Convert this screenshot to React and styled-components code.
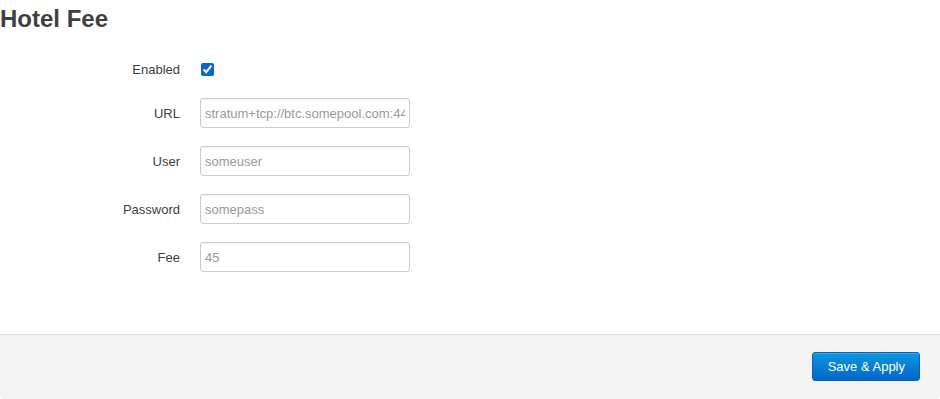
import styled, { createGlobalStyle } from 'styled-components';

const GlobalStyle = createGlobalStyle`
  html, body {
    margin: 0;
    padding: 0;
    background: #fff;
  }
  body {
    font-family: "Liberation Sans", Arial, sans-serif;
    font-size: 13px;
    color: #404040;
  }
`;

const Page = styled.div`
  width: 940px;
  height: 399px;
  display: flex;
  flex-direction: column;
  padding-top: 5px;
  box-sizing: border-box;
`;

const Title = styled.h2`
  margin: 0;
  font-size: 24px;
  line-height: 28px;
  font-weight: bold;
  color: #404040;
`;

const Form = styled.div`
  display: flex;
  flex-direction: column;
  gap: 18px;
  margin-top: 24px;
  flex: 1;
`;

const Row = styled.div`
  display: grid;
  grid-template-columns: 180px 210px;
  column-gap: 20px;
  align-items: center;
  min-height: ${p => (p.$compact ? '24px' : '30px')};
  margin-bottom: ${p => (p.$compact ? '-1px' : '0')};
`;

const Label = styled.label`
  text-align: right;
  font-size: 13px;
  color: #404040;
`;

const Check = styled.input`
  display: block;
  margin: 1px 0 0 1px;
  width: 13px;
  height: 13px;
  accent-color: #0b63d5;
`;

const Field = styled.input`
  box-sizing: border-box;
  width: 210px;
  height: 30px;
  padding: 0 4px;
  border: 1px solid #ccc;
  border-radius: 3px;
  font-family: "Liberation Sans", Arial, sans-serif;
  font-size: 13px;
  color: #404040;
  background: #fff;
  box-shadow: inset 0 1px 1px rgba(0, 0, 0, 0.05);
  outline: none;
  &::placeholder {
    color: #999;
  }
`;

const Footer = styled.div`
  display: flex;
  justify-content: flex-end;
  padding: 17px 20px 18px;
  background: #f3f3f3;
  border-top: 1px solid #ddd;
  border-radius: 0 0 4px 4px;
`;

const Button = styled.button`
  height: 29px;
  padding: 0 14px 0 15px;
  font-family: "Liberation Sans", Arial, sans-serif;
  font-size: 13px;
  color: #fff;
  border: 1px solid #0861b8;
  border-radius: 3px;
  background: linear-gradient(#0a97e0, #0466c9);
  box-shadow: inset 0 1px 0 rgba(255, 255, 255, 0.2);
  cursor: pointer;
`;

const fields = [
  { label: 'URL', placeholder: 'stratum+tcp://btc.somepool.com:443' },
  { label: 'User', placeholder: 'someuser' },
  { label: 'Password', placeholder: 'somepass' },
  { label: 'Fee', placeholder: '45' },
];

export default function App() {
  return (
    <>
      <GlobalStyle />
      <Page>
        <Title>Hotel Fee</Title>
        <Form>
          <Row $compact>
            <Label>Enabled</Label>
            <div>
              <Check type="checkbox" defaultChecked />
            </div>
          </Row>
          {fields.map(f => (
            <Row key={f.label}>
              <Label>{f.label}</Label>
              <Field type="text" placeholder={f.placeholder} />
            </Row>
          ))}
        </Form>
        <Footer>
          <Button>Save &amp; Apply</Button>
        </Footer>
      </Page>
    </>
  );
}
